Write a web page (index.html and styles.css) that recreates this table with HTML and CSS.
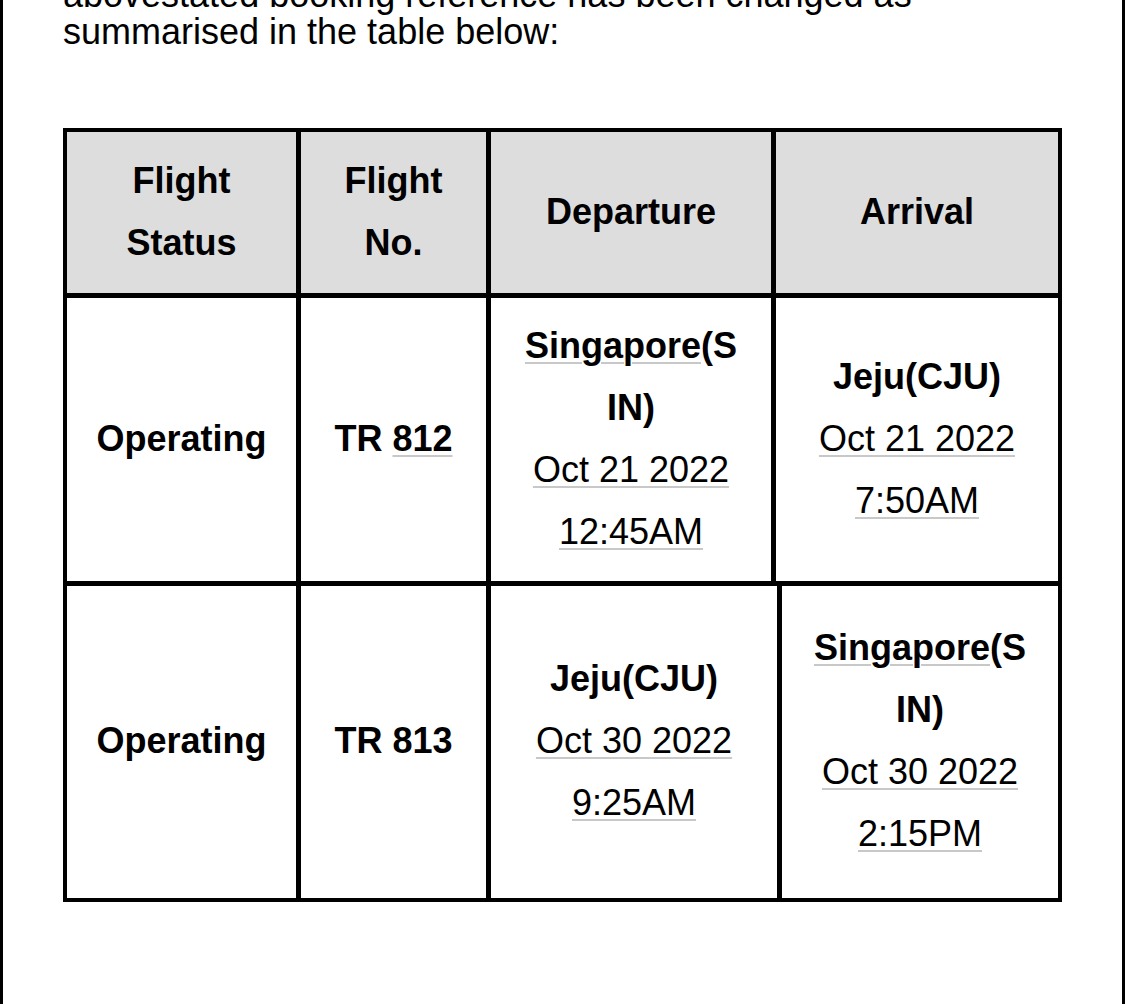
FILE: index.html
```html
<!DOCTYPE html>
<html lang="en">
<head>
<meta charset="utf-8">
<title>Flight changes</title>
<link rel="stylesheet" href="styles.css">
</head>
<body>
<div class="frame">
  <p class="intro">abovestated booking reference has been changed as summarised in the table below:</p>
  <div class="flights">
    <div class="row row-head">
      <div class="cell"><div>Flight<br>Status</div></div>
      <div class="cell"><div>Flight<br>No.</div></div>
      <div class="cell"><div>Departure</div></div>
      <div class="cell"><div>Arrival</div></div>
    </div>
    <div class="row row-one">
      <div class="cell bold"><div>Operating</div></div>
      <div class="cell bold"><div>TR <span class="u">812</span></div></div>
      <div class="cell wide">
        <div class="place"><span class="u">Singapore</span>(SIN)</div>
        <div><span class="u">Oct 21 2022</span></div>
        <div><span class="u">12:45AM</span></div>
      </div>
      <div class="cell wide">
        <div class="place">Jeju(CJU)</div>
        <div><span class="u">Oct 21 2022</span></div>
        <div><span class="u">7:50AM</span></div>
      </div>
    </div>
    <div class="row row-two">
      <div class="cell bold"><div>Operating</div></div>
      <div class="cell bold"><div>TR 813</div></div>
      <div class="cell wide">
        <div class="place">Jeju(CJU)</div>
        <div><span class="u">Oct 30 2022</span></div>
        <div><span class="u">9:25AM</span></div>
      </div>
      <div class="cell wide">
        <div class="place"><span class="u">Singapore</span>(SIN)</div>
        <div><span class="u">Oct 30 2022</span></div>
        <div><span class="u">2:15PM</span></div>
      </div>
    </div>
  </div>
</div>
</body>
</html>
```
FILE: styles.css
```css
html, body {
  margin: 0;
  padding: 0;
  background: #ffffff;
}

body {
  font-family: "Liberation Sans", Arial, Helvetica, sans-serif;
  color: #000000;
  overflow: hidden;
}

.frame {
  display: flow-root;
  box-sizing: border-box;
  min-height: 1004px;
  border-left: 3px solid #000000;
  border-right: 3px solid #000000;
  padding: 0 60px;
}

.intro {
  margin: -24px 0 78px 0;
  font-size: 36px;
  line-height: 37px;
}

.flights {
  border: 4px solid #000000;
  font-size: 36px;
  line-height: 62px;
}

.row {
  display: grid;
  grid-template-columns: 229px 190px 285px 1fr;
}

.row + .row {
  border-top: 5px solid #000000;
}

.row-two {
  grid-template-columns: 229px 190px 291px 1fr;
}

.cell {
  display: flex;
  flex-direction: column;
  justify-content: center;
  text-align: center;
  padding: 17px 16px 18px;
}

.cell.wide {
  padding-left: 31px;
  padding-right: 31px;
}

.cell + .cell {
  border-left: 5px solid #000000;
}

.row-head .cell {
  background: #dddddd;
  font-weight: bold;
  padding: 18px 16px 19px;
}

.row-two .cell {
  padding-top: 31px;
  padding-bottom: 33px;
}

.bold,
.place {
  font-weight: bold;
}

.place {
  word-break: break-all;
}

.u {
  text-decoration: underline;
  text-decoration-color: #c8c8c8;
  text-decoration-thickness: 2px;
  text-underline-offset: 4px;
}
```
